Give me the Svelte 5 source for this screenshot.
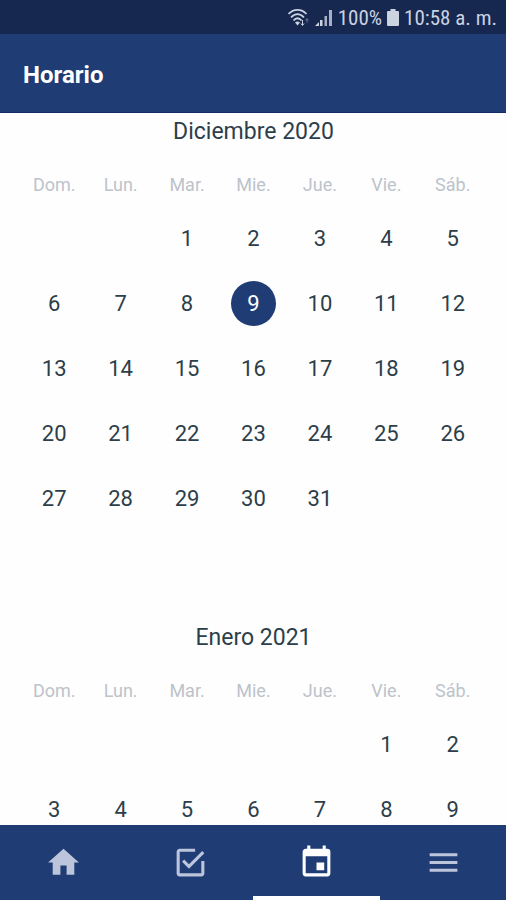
<script lang="ts">
  type Month = { name: string; year: number; start: number; days: number }

  const weekdays = ['Dom.', 'Lun.', 'Mar.', 'Mie.', 'Jue.', 'Vie.', 'Sáb.']
  const months: Month[] = [
    { name: 'Diciembre', year: 2020, start: 2, days: 31 },
    { name: 'Enero', year: 2021, start: 5, days: 31 },
  ]
  const tabs = [
    { id: 'home', label: 'Inicio' },
    { id: 'tasks', label: 'Tareas' },
    { id: 'schedule', label: 'Horario' },
    { id: 'menu', label: 'Menú' },
  ]

  let selected = $state('Diciembre-9')
  let activeTab = $state('schedule')

  // always six weeks, so every month takes the same height
  function weeksOf({ start, days }: Month) {
    return Array.from({ length: 6 }, (_, week) =>
      Array.from({ length: 7 }, (_, i) => {
        const day = week * 7 + i - start + 1
        return day > 0 && day <= days ? day : null
      })
    )
  }
</script>

<div class="app">
  <div class="status">
    <svg class="wifi" viewBox="0 0 22 20" aria-hidden="true">
      <g fill="none" stroke="currentColor" stroke-width="1.8">
        <path d="M.5 6C5.500 .5 13.500 .5 18.500 6" />
        <path d="M3 9.500C7 5 12 5 16 9.500" />
        <path d="M5.500 12.500C8 9.500 11 9.500 13.500 12.500" />
      </g>
      <path d="M7 14.500Q9.500 12.500 12 14.500L9.500 17.500z" fill="currentColor" />
      <path d="M14.500 12v5M13 15.500l1.500 2 1.500-2" fill="none" stroke="currentColor" />
      <path d="M19 15v-4M17.500 12.500l1.500-2 1.500 2" fill="none" stroke="currentColor" opacity="0.4" />
    </svg>
    <svg class="signal" viewBox="0 0 18 20" aria-hidden="true">
      <path d="M0 18l4-4v4zM5 12h2.500v6H5z" fill="currentColor" />
      <path d="M9.500 8h2.500v10H9.500zM14 2h3v16h-3z" fill="currentColor" opacity="0.8" />
    </svg>
    <span>100%</span>
    <svg class="battery" viewBox="0 0 12 20" fill="currentColor" aria-hidden="true">
      <path d="M3.500 1h5v2H11q1 0 1 1v13q0 1-1 1H1q-1 0-1-1V4q0-1 1-1h2.500z" />
    </svg>
    <span>10:58 a. m.</span>
  </div>

  <header>
    <h1>Horario</h1>
  </header>

  <main>
    {#each months as month}
      <section>
        <h2>{month.name} {month.year}</h2>
        <table>
          <thead>
            <tr>
              {#each weekdays as weekday}
                <th scope="col">{weekday}</th>
              {/each}
            </tr>
          </thead>
          <tbody>
            {#each weeksOf(month) as week}
              <tr>
                {#each week as day}
                  <td>
                    {#if day}
                      <button
                        class="day"
                        class:selected={selected === `${month.name}-${day}`}
                        onclick={() => (selected = `${month.name}-${day}`)}
                      >{day}</button>
                    {/if}
                  </td>
                {/each}
              </tr>
            {/each}
          </tbody>
        </table>
      </section>
    {/each}
  </main>

  <nav>
    {#each tabs as tab}
      <button
        class="tab"
        class:active={activeTab === tab.id}
        aria-label={tab.label}
        onclick={() => (activeTab = tab.id)}
      >
        <svg viewBox="0 0 24 24" fill="currentColor" aria-hidden="true">
          {#if tab.id === 'home'}
            <path d="M10 20v-6h4v6h5v-8h3L12 3 2 12h3v8z" />
          {:else if tab.id === 'tasks'}
            <path d="M19 19H5V5h10V3H5c-1.110 0-2 .89-2 2v14a2 2 0 0 0 2 2h14a2 2 0 0 0 2-2v-8h-2M7.910 10.080L6.500 11.500 11 16 21 6l-1.410-1.420L11 13.170z" />
          {:else if tab.id === 'schedule'}
            <path d="M19 19H5V8h14M16 1v2H8V1H6v2H5c-1.110 0-2 .89-2 2v14a2 2 0 0 0 2 2h14a2 2 0 0 0 2-2V5a2 2 0 0 0-2-2h-1V1m-1 11h-5v5h5z" />
          {:else}
            <path d="M3 6h18v2H3zm0 5h18v2H3zm0 5h18v2H3z" />
          {/if}
        </svg>
      </button>
    {/each}
  </nav>
</div>

<style>
  :global(body) {
    margin: 0;
  }

  .app {
    display: flex;
    flex-direction: column;
    height: 100vh;
    overflow: hidden;
    background: #fefefe;
    color: #2d3e4b;
    font-family: Roboto, sans-serif;
  }

  .status {
    display: flex;
    flex-shrink: 0;
    align-items: center;
    justify-content: flex-end;
    gap: 5px;
    height: 34px;
    padding: 2px 9px 0 0;
    box-sizing: border-box;
    background: #162750;
    color: #cbd2e0;
    font-family: 'Roboto Condensed', Roboto, sans-serif;
    font-size: 21px;
    white-space: nowrap;
  }
  .status svg {
    height: 20px;
  }
  .wifi {
    width: 22px;
  }
  .signal {
    width: 18px;
  }
  .battery {
    width: 12px;
  }

  header {
    display: flex;
    flex-shrink: 0;
    align-items: center;
    height: 79px;
    padding: 3px 23px 0;
    box-sizing: border-box;
    border-bottom: 1px solid #142c66;
    background: #1f3c74;
    color: #fff;
  }
  h1 {
    margin: 0;
    font-size: 24px;
    font-weight: 700;
  }

  main {
    flex: 1;
    min-height: 0;
    overflow-y: auto;
    scrollbar-width: none;
  }
  section {
    padding: 6px 20px 23px 21px;
  }
  h2 {
    margin: 0;
    font-size: 23px;
    font-weight: 400;
    line-height: 26px;
    text-align: center;
  }
  table {
    width: 100%;
    table-layout: fixed;
    border-collapse: collapse;
  }
  th {
    padding: 29px 0 10px;
    color: #bcc3ca;
    font-size: 18px;
    font-weight: 400;
    line-height: 22px;
  }
  td {
    height: 65px;
    padding: 0;
    text-align: center;
  }
  .day {
    width: 45px;
    height: 45px;
    padding: 0;
    border: 0;
    border-radius: 50%;
    background: none;
    color: inherit;
    font: inherit;
    font-size: 22px;
    vertical-align: middle;
    cursor: pointer;
  }
  .day.selected {
    background: #1f3c74;
    color: #fff;
  }

  nav {
    display: flex;
    flex-shrink: 0;
    height: 75px;
    background: #1f3c74;
  }
  .tab {
    display: flex;
    flex: 1;
    align-items: center;
    justify-content: center;
    padding: 4px 0 0 1px;
    border: 0;
    border-bottom: 4px solid transparent;
    background: none;
    color: #bcc5dc;
    cursor: pointer;
  }
  .tab.active {
    border-bottom-color: #fff;
    color: #fff;
  }
  .tab svg {
    width: 37px;
    height: 37px;
  }
</style>
